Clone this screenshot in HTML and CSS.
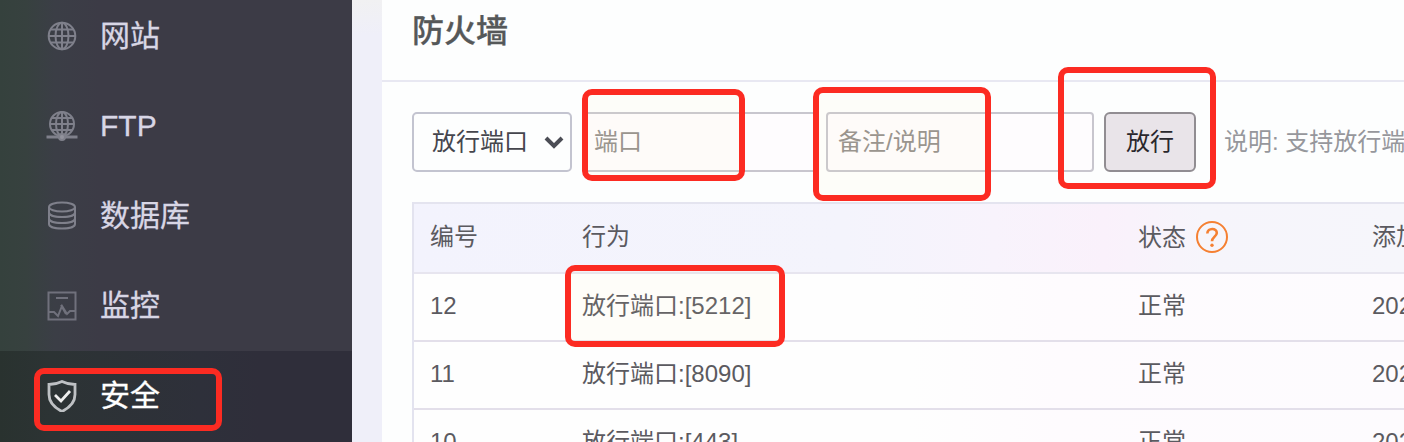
FILE: index.html
```html
<!DOCTYPE html>
<html lang="zh-CN">
<head>
<meta charset="utf-8">
<title>防火墙</title>
<link rel="stylesheet" href="styles.css">
</head>
<body>
<div class="app">
  <nav class="sidebar">
    <a class="item">
      <svg class="icon" viewBox="0 0 32 32"><circle cx="16" cy="16" r="13.3"/><ellipse cx="16" cy="16" rx="6.5" ry="13.3"/><path d="M16 3v26M3 16h26M5 9.5h22M5 22.5h22"/></svg>
      <span>网站</span>
    </a>
    <a class="item">
      <svg class="icon" viewBox="0 0 32 32"><circle cx="16" cy="14" r="12"/><ellipse cx="16" cy="14" rx="6" ry="12"/><path d="M16 2v24M4 14h24M6 8h20M6 20h20"/><path class="bar" d="M.5 27h31"/><circle class="dot" cx="16" cy="27" r="3"/></svg>
      <span>FTP</span>
    </a>
    <a class="item">
      <svg class="icon" viewBox="0 0 32 32"><ellipse cx="16" cy="7" rx="13" ry="4.6"/><path d="M3 7v17c0 6 26 6 26 0V7M3 12.5c0 6 26 6 26 0M3 18.5c0 6 26 6 26 0"/></svg>
      <span>数据库</span>
    </a>
    <a class="item">
      <svg class="icon dim" viewBox="0 0 32 32"><path d="M2.5 2.5h27v27h-27zM10 8h12M3 22h5l4 4 4-10 5 8 3-3h5M15 15l5 9"/></svg>
      <span>监控</span>
    </a>
    <a class="item active">
      <svg class="icon" viewBox="0 0 32 32"><path d="M16 1.5c4 2 8 3 13 3v10c0 8-5 13-13 17C8 27.500 3 22.500 3 14.500v-10c5 0 9-1 13-3z"/><path class="check" d="M9 15l6 6 9-10"/></svg>
      <span>安全</span>
    </a>
  </nav>
  <main class="panel">
    <h1 class="title">防火墙</h1>
    <div class="toolbar">
      <div class="select">放行端口<svg class="chevron" viewBox="0 0 20 14"><path d="M2 3l8 8 8-8"/></svg></div>
      <div class="input port">端口</div>
      <div class="input note">备注/说明</div>
      <button class="allow">放行</button>
      <span class="hint">说明: 支持放行端</span>
    </div>
    <div class="table">
      <div class="row head"><span>编号</span><span>行为</span><span class="status">状态<svg class="help" viewBox="0 0 32 32"><circle cx="16" cy="16" r="15"/><path class="hook" d="M11.300 12.500c.2-6 9.700-6 9.500-.5-.1 3.500-4.800 4-4.800 8.300"/><circle class="point" cx="16" cy="24.300" r="1.700"/></svg></span><span>添加</span></div>
      <div class="row"><span>12</span><span>放行端口:[5212]</span><span>正常</span><span>202</span></div>
      <div class="row"><span>11</span><span>放行端口:[8090]</span><span>正常</span><span>202</span></div>
      <div class="row"><span>10</span><span>放行端口:[443]</span><span>正常</span><span>202</span></div>
    </div>
  </main>
  <i class="mark mark-menu"></i>
  <i class="mark mark-port"></i>
  <i class="mark mark-note"></i>
  <i class="mark mark-allow"></i>
  <i class="mark mark-rule"></i>
</div>
</body>
</html>
```
FILE: styles.css
```css
* { box-sizing: border-box; }
body { margin: 0; font-family: "Liberation Sans", "Noto Sans CJK SC", sans-serif; overflow: hidden; }
.app { position: relative; display: flex; width: 1404px; height: 442px; overflow: hidden; background: linear-gradient(#f1f1f2, #efeff9 35px); }

.sidebar { width: 352px; flex: none; overflow: hidden; background: linear-gradient(90deg, #35413d 0, #37413f 26px, #3b3e46 55px, #3c3b46 100px); }
.item { display: flex; align-items: center; height: 90px; padding-left: 46px; gap: 22px; font-size: 30px; line-height: 44px; color: #d8d6e5; -webkit-text-stroke: .3px; }
.item:first-child { margin-top: -9px; }
.item.active { height: 92px; padding-bottom: 2px; color: #fff; background: linear-gradient(90deg, #29322f 0, #2c3334 50px, #2e303a 200px, #2f2e3a 260px); }
.icon { width: 32px; height: 32px; fill: none; stroke: #7f808b; stroke-width: 2; }
.icon .bar { stroke-width: 3; }
.icon .dot { fill: #92939d; }
.icon.dim { stroke: #70717c; }
.active .icon { stroke: #bec1c4; stroke-width: 2.8; }
.active .check { stroke: #eee; }

.panel { flex: none; width: 1022px; margin-left: 30px; background: #fdfefe; }
.title { height: 82px; margin: 0; padding: 8px 0 0 30px; border-bottom: 2px solid #e8e8f2; font-size: 32px; font-weight: 500; line-height: 46px; color: #555859; -webkit-text-stroke: .3px; }
.toolbar { display: flex; height: 120px; padding: 30px 0 30px 30px; font-size: 24px; line-height: 56px; white-space: nowrap; }
.toolbar > * { flex: none; }
.select { display: flex; align-items: center; justify-content: space-between; width: 160px; padding: 0 6px 0 18px; border: 2px solid #c3c4d0; border-radius: 5px; color: #45464d; }
.chevron { width: 20px; height: 14px; fill: none; stroke: #4b4d55; stroke-width: 4; }
.input { border: 2px solid #c8c6ce; border-radius: 4px; background: #fefcfe; color: #938e8b; }
.port { width: 234px; margin-left: 11px; padding-left: 9px; }
.note { width: 268px; margin-left: 9px; padding-left: 10px; }
.allow { width: 92px; margin-left: 10px; padding: 0; border: 2px solid #918d92; border-radius: 6px; background: #e9e4e9; color: #29272c; font: inherit; }
.hint { margin-left: 28px; padding-top: 2px; color: #96979c; }

.table { margin-left: 30px; border-left: 2px solid #e3e3ef; font-size: 24px; color: #5b5a60; }
.row { display: grid; grid-template-columns: 152px 556px 234px 200px; height: 68px; padding-left: 16px; border-bottom: 2px solid #e3dfea; line-height: 63px; white-space: nowrap; background: linear-gradient(90deg, #fefefe 50%, #fefbfe 65%, #fdfbfe); }
.row.head { height: 72px; border-top: 2px solid #e4e4ef; border-bottom-color: #e7e5ef; line-height: 65px; background: linear-gradient(90deg, #f3f3fd 0, #f4f4fc 430px, #f8f3fc 580px, #faf1fb 690px, #f6f5fb 790px, #f6f6fb 100%); }
.status { display: flex; align-items: center; gap: 10px; height: 66px; }
.help { width: 32px; height: 32px; fill: none; stroke: #f58032; stroke-width: 2; }
.help .hook { stroke-width: 2.6; }
.help .point { fill: #f58032; stroke: none; }

/* Highlight frames lying over the interface */
.mark { position: absolute; border: 6px solid #fc2b22; border-radius: 10px; background: rgba(255, 245, 190, .07); }
.mark-menu { left: 34px; top: 368px; width: 188px; height: 63px; background: none; }
.mark-port { left: 582px; top: 89px; width: 163px; height: 92px; }
.mark-note { left: 813px; top: 87px; width: 178px; height: 114px; }
.mark-allow { left: 1058px; top: 67px; width: 158px; height: 122px; background: none; }
.mark-rule { left: 565px; top: 265px; width: 220px; height: 82px; }
```
